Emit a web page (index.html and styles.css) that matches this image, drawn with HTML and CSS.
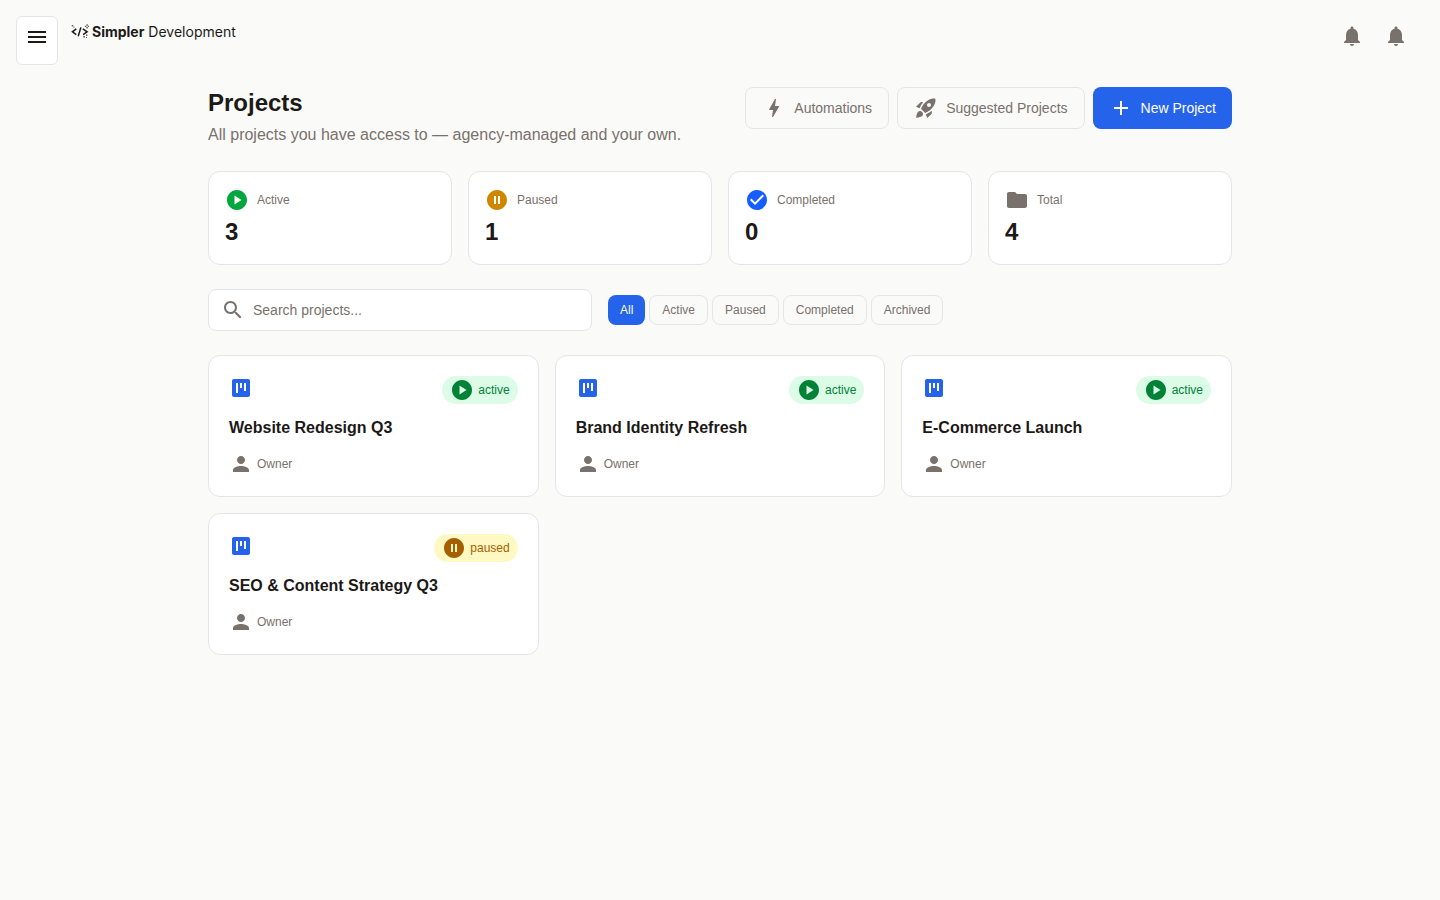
FILE: index.html
```html
<!DOCTYPE html>
<html lang="en">
<head>
<meta charset="utf-8">
<title>Projects</title>
<link rel="stylesheet" href="styles.css">
</head>
<body>
<svg class="sprite" aria-hidden="true">
  <symbol id="menu" viewBox="0 0 24 24"><path d="M3 18h18v-2H3v2zm0-5h18v-2H3v2zm0-7v2h18V6H3z"/></symbol>
  <symbol id="bell" viewBox="0 0 24 24"><path d="M12 22c1.100 0 2-.9 2-2h-4c0 1.100.89 2 2 2zm6-6v-5c0-3.070-1.640-5.640-4.500-6.320V4c0-.83-.67-1.500-1.500-1.500s-1.500.67-1.500 1.500v.68C7.630 5.360 6 7.920 6 11v5l-2 2v1h16v-1l-2-2z"/></symbol>
  <symbol id="bolt" viewBox="0 0 24 24"><path d="M11 21h-1l1-7H7.500c-.58 0-.57-.32-.38-.66.19-.34.050-.08.070-.12C8.480 10.940 10.420 7.540 13 3h1l-1 7h3.500c.49 0 .56.330.470.510l-.070.150C12.960 17.550 11 21 11 21z"/></symbol>
  <symbol id="rocket" viewBox="0 0 24 24"><path d="M9.190 6.350c-2.040 2.290-3.440 5.580-3.570 5.890L2 10.690l4.050-4.050c.47-.47 1.150-.68 1.810-.55l1.330.26zM11.170 17s3.740-1.550 5.890-3.700c5.400-5.400 4.500-9.620 4.210-10.570-.95-.3-5.170-1.190-10.570 4.210C8.550 9.090 7 12.830 7 12.830L11.170 17zm6.480-2.190c-2.290 2.040-5.580 3.440-5.890 3.570L13.310 22l4.050-4.050c.47-.47.68-1.150.55-1.810l-.26-1.330zM9 18c0 .83-.34 1.580-.88 2.120C6.940 21.300 2 22 2 22s.7-4.940 1.880-6.120C4.420 15.340 5.170 15 6 15c1.660 0 3 1.340 3 3zm4-9c0-1.100.9-2 2-2s2 .9 2 2-.9 2-2 2-2-.9-2-2z"/></symbol>
  <symbol id="plus" viewBox="0 0 24 24"><path d="M19 13h-6v6h-2v-6H5v-2h6V5h2v6h6v2z"/></symbol>
  <symbol id="play" viewBox="0 0 24 24"><path d="M12 2C6.480 2 2 6.480 2 12s4.480 10 10 10 10-4.480 10-10S17.520 2 12 2zM9.500 16.500v-9l7 4.500-7 4.500z"/></symbol>
  <symbol id="pause" viewBox="0 0 24 24"><path d="M12 2C6.480 2 2 6.480 2 12s4.480 10 10 10 10-4.480 10-10S17.520 2 12 2zm-1 14H9V8h2v8zm4 0h-2V8h2v8z"/></symbol>
  <symbol id="check" viewBox="0 0 24 24"><path d="M12 2C6.480 2 2 6.480 2 12s4.480 10 10 10 10-4.480 10-10S17.520 2 12 2zm-2 15l-5-5 1.410-1.410L10 14.170l7.590-7.590L19 8l-9 9z"/></symbol>
  <symbol id="folder" viewBox="0 0 24 24"><path d="M10 4H4c-1.100 0-1.990.9-1.990 2L2 18c0 1.100.9 2 2 2h16c1.100 0 2-.9 2-2V8c0-1.100-.9-2-2-2h-8l-2-2z"/></symbol>
  <symbol id="search" viewBox="0 0 24 24"><path d="M15.500 14h-.79l-.28-.27C15.410 12.590 16 11.110 16 9.500 16 5.910 13.090 3 9.500 3S3 5.910 3 9.500 5.910 16 9.500 16c1.610 0 3.090-.59 4.230-1.570l.27.28v.79l5 4.990L20.490 19l-4.990-5zm-6 0C7.010 14 5 11.990 5 9.500S7.010 5 9.500 5 14 7.010 14 9.500 11.990 14 9.500 14z"/></symbol>
  <symbol id="kanban" viewBox="0 0 24 24"><path d="M19 3H5c-1.100 0-2 .9-2 2v14c0 1.100.9 2 2 2h14c1.100 0 2-.9 2-2V5c0-1.100-.9-2-2-2zM9 17H7V7h2v10zm4-5h-2V7h2v5zm4 3h-2V7h2v8z"/></symbol>
  <symbol id="person" viewBox="0 0 24 24"><path d="M12 12c2.210 0 4-1.790 4-4s-1.790-4-4-4-4 1.790-4 4 1.790 4 4 4zm0 2c-2.670 0-8 1.340-8 4v2h16v-2c0-2.660-5.330-4-8-4z"/></symbol>
</svg>

<header class="topbar">
  <button class="menu-button" aria-label="Menu"><svg class="icon"><use href="#menu"/></svg></button>
  <a class="brand">
    <svg class="brand-mark" viewBox="0 0 18 16">
      <path class="brand-stroke" d="M5.300 4.900 1.400 7.800l3.900 2.900M9.900 3.400 7.200 12.200M11.800 4.900l4.300 2.900-4 2.900"/>
      <path class="brand-dots" d="M.7 1h1.600v1.600H.7zM2.500 2.800h1v1h-1zM15.400.3h1.400v1.500h-1.400zM13.900 1.700h1.400v1.300h-1.400zM16.800 1.700H18V3h-1.200zM15.400 3h1.400v1.500h-1.400zM15 10.600h1.400V12H15zM12.300 12h1.600v1.600h-1.600zM15 13h1v1h-1z"/>
    </svg>
    <span class="brand-name"><b>Simpler</b> Development</span>
  </a>
  <div class="alerts">
    <svg class="icon"><use href="#bell"/></svg>
    <svg class="icon"><use href="#bell"/></svg>
  </div>
</header>

<main class="page">
  <div class="page-head">
    <div>
      <h1 class="title">Projects</h1>
      <p class="subtitle">All projects you have access to — agency-managed and your own.</p>
    </div>
    <div class="actions">
      <button class="button"><svg class="icon"><use href="#bolt"/></svg>Automations</button>
      <button class="button"><svg class="icon"><use href="#rocket"/></svg>Suggested Projects</button>
      <button class="button button-primary"><svg class="icon"><use href="#plus"/></svg>New Project</button>
    </div>
  </div>

  <section class="stats">
    <div class="stat"><div class="stat-label"><svg class="icon green"><use href="#play"/></svg>Active</div><div class="stat-value">3</div></div>
    <div class="stat"><div class="stat-label"><svg class="icon amber"><use href="#pause"/></svg>Paused</div><div class="stat-value">1</div></div>
    <div class="stat"><div class="stat-label"><svg class="icon blue"><use href="#check"/></svg>Completed</div><div class="stat-value">0</div></div>
    <div class="stat"><div class="stat-label"><svg class="icon"><use href="#folder"/></svg>Total</div><div class="stat-value">4</div></div>
  </section>

  <section class="toolbar">
    <label class="search"><svg class="icon"><use href="#search"/></svg><input class="search-input" type="text" placeholder="Search projects..."></label>
    <div class="filters">
      <button class="filter filter-on">All</button>
      <button class="filter">Active</button>
      <button class="filter">Paused</button>
      <button class="filter">Completed</button>
      <button class="filter">Archived</button>
    </div>
  </section>

  <section class="projects">
    <article class="project">
      <div class="project-top"><svg class="icon board"><use href="#kanban"/></svg><span class="status status-active"><svg class="icon"><use href="#play"/></svg>active</span></div>
      <h2 class="project-name">Website Redesign Q3</h2>
      <div class="owner"><svg class="icon"><use href="#person"/></svg>Owner</div>
    </article>
    <article class="project">
      <div class="project-top"><svg class="icon board"><use href="#kanban"/></svg><span class="status status-active"><svg class="icon"><use href="#play"/></svg>active</span></div>
      <h2 class="project-name">Brand Identity Refresh</h2>
      <div class="owner"><svg class="icon"><use href="#person"/></svg>Owner</div>
    </article>
    <article class="project">
      <div class="project-top"><svg class="icon board"><use href="#kanban"/></svg><span class="status status-active"><svg class="icon"><use href="#play"/></svg>active</span></div>
      <h2 class="project-name">E-Commerce Launch</h2>
      <div class="owner"><svg class="icon"><use href="#person"/></svg>Owner</div>
    </article>
    <article class="project">
      <div class="project-top"><svg class="icon board"><use href="#kanban"/></svg><span class="status status-paused"><svg class="icon"><use href="#pause"/></svg>paused</span></div>
      <h2 class="project-name">SEO &amp; Content Strategy Q3</h2>
      <div class="owner"><svg class="icon"><use href="#person"/></svg>Owner</div>
    </article>
  </section>
</main>
</body>
</html>
```

FILE: styles.css
```css
* { box-sizing: border-box; margin: 0; }
body {
  min-height: 100vh;
  background: #fafaf9;
  color: #1c1917;
  font-family: "Liberation Sans", Arial, sans-serif;
  font-size: 16px;
  line-height: 24px;
}
button, input { font: inherit; color: inherit; }
.sprite { display: none; }
.icon { display: block; flex: none; width: 24px; height: 24px; fill: currentColor; }

.topbar { display: flex; align-items: flex-start; height: 87px; padding: 16px 32px 0 16px; }
.menu-button {
  padding: 8px 8px 15px;
  background: #fff;
  border: 1px solid #e5e5e5;
  border-radius: 6px;
}
.brand { display: flex; align-items: center; gap: 3px; height: 24px; margin: 4px 0 0 13px; }
.brand-mark { width: 18px; height: 16px; }
.brand-stroke { fill: none; stroke: #1c1917; stroke-width: 1.500; }
.brand-dots { fill: #1c1917; opacity: .7; }
.brand-name { font-family: Inter, sans-serif; font-size: 14px; }
.alerts { display: flex; gap: 20px; margin: 8px 0 0 auto; color: #79716b; }

.page { width: 1024px; margin: 0 auto; }
.page-head { display: flex; justify-content: space-between; align-items: flex-start; }
.title { font-size: 24px; line-height: 32px; font-weight: 700; }
.subtitle { margin-top: 4px; color: #79716b; }
.actions { display: flex; gap: 8px; }
.button {
  display: flex;
  align-items: center;
  gap: 8px;
  padding: 8px 16px;
  background: transparent;
  border: 1px solid #e5e5e5;
  border-radius: 8px;
  color: #79716b;
  font-size: 14px;
  line-height: 20px;
}
.button-primary { background: #2563eb; border: 0; color: #fff; }

.stats { display: grid; grid-template-columns: repeat(4, 1fr); gap: 16px; margin-top: 24px; }
.stat { padding: 16px; background: #fff; border: 1px solid #e5e5e5; border-radius: 12px; }
.stat-label { display: flex; align-items: center; gap: 8px; color: #79716b; font-size: 12px; line-height: 16px; }
.stat-value { margin-top: 4px; font-size: 24px; line-height: 32px; font-weight: 700; }
.green { color: #00a63e; }
.amber { color: #d08700; }
.blue { color: #155dfc; }

.toolbar { display: flex; align-items: center; gap: 16px; margin-top: 24px; }
.search {
  display: flex;
  align-items: center;
  gap: 8px;
  width: 384px;
  height: 42px;
  padding: 0 12px;
  background: #fff;
  border: 1px solid #e5e5e5;
  border-radius: 8px;
  color: #79716b;
}
.search-input { flex: 1; min-width: 0; padding: 0; border: 0; outline: 0; background: none; font-size: 14px; line-height: 20px; }
.search-input::placeholder { color: #79716b; opacity: 1; }
.filters { display: flex; gap: 4px; }
.filter {
  padding: 6px 12px;
  background: transparent;
  border: 1px solid #e5e5e5;
  border-radius: 8px;
  color: #79716b;
  font-size: 12px;
  line-height: 16px;
}
.filter-on { background: #2563eb; border: 0; color: #fff; }

.projects { display: grid; grid-template-columns: repeat(3, 1fr); gap: 16px; margin-top: 24px; }
.project { padding: 20px; background: #fff; border: 1px solid #e5e5e5; border-radius: 12px; }
.project-top { display: flex; justify-content: space-between; align-items: flex-start; }
.board { color: #2563eb; }
.status {
  display: flex;
  align-items: center;
  gap: 4px;
  padding: 2px 8px;
  border-radius: 14px;
  font-size: 12px;
  line-height: 16px;
}
.status-active { background: #dcfce7; color: #008236; }
.status-paused { background: #fef9c2; color: #a65f00; }
.project-name { margin: 12px 0; font-size: 16px; line-height: 24px; font-weight: 700; }
.owner { display: flex; align-items: center; gap: 4px; color: #79716b; font-size: 12px; line-height: 16px; }
```
